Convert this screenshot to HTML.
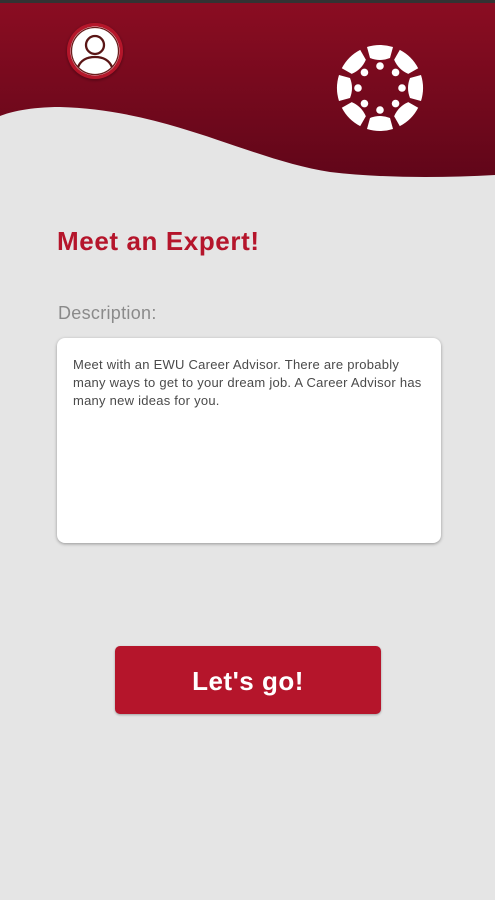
<!DOCTYPE html>
<html><head><meta charset="utf-8"><style>
*{margin:0;padding:0;box-sizing:border-box}
body{width:495px;height:900px;overflow:hidden;background:#e5e5e5;font-family:"Liberation Sans",sans-serif;position:relative}
.abs{position:absolute}
h1{position:absolute;left:57px;top:226px;font-size:26px;font-weight:bold;color:#b5152b;letter-spacing:0.6px}
.lbl{position:absolute;left:58px;top:303px;font-size:18px;color:#8a8a8a;letter-spacing:0.3px}
.box{position:absolute;left:57px;top:338px;width:384px;height:205px;background:#fff;border-radius:8px;box-shadow:0 1px 3px rgba(0,0,0,.35);padding:18px 16px;font-size:13px;line-height:18px;color:#4a4a4a;letter-spacing:0.25px}
.btn{position:absolute;left:115px;top:646px;width:266px;height:68px;background:#b5152b;border-radius:5px;box-shadow:0 1px 2px rgba(0,0,0,.3);color:#fff;font-size:26px;font-weight:bold;text-align:center;line-height:70px;letter-spacing:0.5px}
</style></head><body>
<svg class="abs" style="left:0;top:0" width="495" height="190" viewBox="0 0 495 190">
<defs><linearGradient id="g" x1="0" y1="0" x2="0" y2="1"><stop offset="0" stop-color="#8b0d22"/><stop offset="1" stop-color="#610619"/></linearGradient>
<filter id="s"><feDropShadow dx="0" dy="1" stdDeviation="1.5" flood-opacity=".4"/></filter></defs>
<path d="M0,0H495V175C440,178 380,178 330,172C250,160 170,110 60,107C30,107 10,112 0,116Z" fill="url(#g)"/>
<rect x="0" y="0" width="495" height="3" fill="#333"/>
<g filter="url(#s)"><circle cx="95" cy="51" r="28" fill="#b5152b"/></g>
<circle cx="95" cy="51" r="24.5" fill="#fff"/>
<circle cx="95" cy="51" r="23.5" fill="none" stroke="#6a1b1b" stroke-width="1.3"/>
<circle cx="95" cy="45" r="9" fill="none" stroke="#5a1515" stroke-width="2.3"/>
<path d="M78,67C81,60 87,57 95,57C103,57 109,60 112,67" fill="none" stroke="#5a1515" stroke-width="2.3"/>
<g transform="translate(380,88)" fill="#fff">
<g id="p"><path d="M-13,-41A43,43 0 0 1 13,-41L10,-30Q0,-26 -10,-30Z"/><circle cx="0" cy="-22" r="3.8"/></g>
<use href="#p" transform="rotate(45)"/><use href="#p" transform="rotate(90)"/><use href="#p" transform="rotate(135)"/>
<use href="#p" transform="rotate(180)"/><use href="#p" transform="rotate(225)"/><use href="#p" transform="rotate(270)"/><use href="#p" transform="rotate(315)"/>
</g>
</svg>
<h1>Meet an Expert!</h1>
<div class="lbl">Description:</div>
<div class="box">Meet with an EWU Career Advisor. There are probably many ways to get to your dream job. A Career Advisor has many new ideas for you.</div>
<div class="btn">Let's go!</div>
</body></html>
